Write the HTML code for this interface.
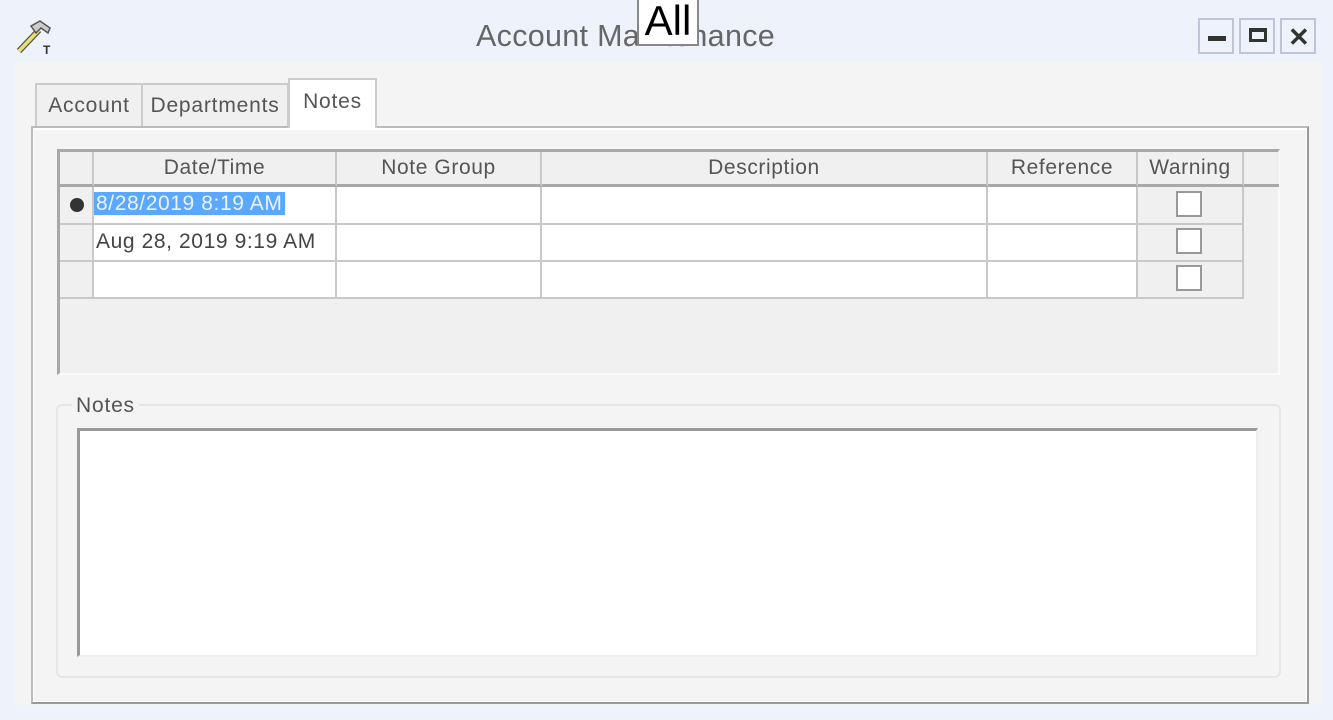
<!DOCTYPE html>
<html><head><meta charset="utf-8"><style>
*{margin:0;padding:0;box-sizing:border-box}
body{width:1333px;height:720px;background:#eef2fb;position:relative;overflow:hidden;font-family:"Liberation Sans",sans-serif;color:#444}
.a{position:absolute}
.t{font-size:21px;letter-spacing:0.8px;color:#555}
.hdr{background:#f0f0f0;border-right:2px solid #c8c8c8;border-bottom:3px solid #a8a8a8;text-align:center;font-size:21px;letter-spacing:0.6px;color:#555;line-height:32px}
.cell{background:#fff;border-right:2px solid #c8c8c8;border-bottom:2px solid #c8c8c8;font-size:21px;letter-spacing:0.6px;line-height:34px;color:#444}
.g{background:#f0f0f0}
.cb{position:absolute;width:26px;height:26px;border:2px solid #999;background:#fff}
.btn{position:absolute;top:18px;width:36px;height:36px;border:2px solid #bcc6d6;background:#eef2fb}
</style></head><body>
<!-- title bar -->
<svg class="a" style="left:16px;top:20px" width="40" height="36" viewBox="0 0 40 36">
<path d="M3 31 L23 10" stroke="#555" stroke-width="6" fill="none"/>
<path d="M3 31 L23 10" stroke="#e8e070" stroke-width="3.5" fill="none"/>
<path d="M15 6 L24 1 L34 8 L32 13 L25 8 L20 13 Z" fill="#ccc" stroke="#555" stroke-width="1.5"/>
<text x="27" y="34" font-size="12" font-weight="bold" font-family="Liberation Sans" fill="#333">T</text>
</svg>
<div class="a" style="left:476px;top:19px;font-size:30.5px;color:#666;letter-spacing:0.3px">Account Maintenance</div>
<div class="a" style="left:637px;top:-2px;width:62px;height:48px;background:#fff;border:2px solid #888;font-size:42px;color:#000;line-height:42px;text-align:center">All</div>
<div class="btn" style="left:1198px"><div class="a" style="left:8px;top:16px;width:18px;height:5px;background:#333"></div></div>
<div class="btn" style="left:1239px"><div class="a" style="left:8px;top:8px;width:18px;height:14px;border:3px solid #333;border-top-width:4px"></div></div>
<div class="btn" style="left:1280px"><div class="a" style="left:6px;top:2px;font-size:26px;font-weight:bold;color:#333">✕</div></div>

<!-- body -->
<div class="a" style="left:15px;top:62px;width:1307px;height:643px;background:#f4f4f4"></div>
<!-- tabs -->
<div class="a t" style="left:35px;top:83px;width:108px;height:44px;border:2px solid #ccc;border-bottom:none;background:#f0f0f0;text-align:center;line-height:42px">Account</div>
<div class="a t" style="left:143px;top:83px;width:146px;height:44px;border:2px solid #ccc;border-bottom:none;border-left:none;background:#f0f0f0;text-align:center;line-height:42px">Departments</div>
<div class="a" style="left:31px;top:126px;width:1278px;height:578px;border:2px solid #bbb;border-right-color:#999;border-bottom-color:#999;background:#fff"></div>
<div class="a t" style="left:288px;top:78px;width:89px;height:52px;border:2px solid #ccc;border-bottom:none;background:#fff;text-align:center;line-height:44px">Notes</div>
<div class="a" style="left:33px;top:128px;width:1274px;height:574px;background:#f4f4f4;border:1px solid #fff;border-top:2px solid #fff"></div>

<!-- grid -->
<div class="a" style="left:57px;top:149px;width:1223px;height:226px;background:#f0f0f0;border-top:3px solid #a8a8a8;border-left:3px solid #a8a8a8;border-bottom:2px solid #fafafa;border-right:2px solid #fafafa"></div>
<div class="a hdr" style="left:60px;top:152px;width:34px;height:35px"></div>
<div class="a hdr" style="left:94px;top:152px;width:243px;height:35px">Date/Time</div>
<div class="a hdr" style="left:337px;top:152px;width:205px;height:35px">Note Group</div>
<div class="a hdr" style="left:542px;top:152px;width:446px;height:35px">Description</div>
<div class="a hdr" style="left:988px;top:152px;width:150px;height:35px">Reference</div>
<div class="a hdr" style="left:1138px;top:152px;width:106px;height:35px">Warning</div>
<div class="a hdr" style="left:1244px;top:152px;width:35px;height:35px;border-right:none"></div>

<!-- rows -->
<div class="a cell g" style="left:60px;top:187px;width:34px;height:38px"><div class="a" style="left:10px;top:11px;width:14px;height:14px;border-radius:50%;background:#333"></div></div>
<div class="a cell" style="left:94px;top:187px;width:243px;height:38px"><span style="background:#5aa8ff;color:#eaf3ff;padding:0 2px">8/28/2019 8:19 AM</span></div>
<div class="a cell" style="left:337px;top:187px;width:205px;height:38px"></div>
<div class="a cell" style="left:542px;top:187px;width:446px;height:38px"></div>
<div class="a cell" style="left:988px;top:187px;width:150px;height:38px"></div>
<div class="a cell g" style="left:1138px;top:187px;width:106px;height:38px"><div class="cb" style="left:38px;top:4px"></div></div>

<div class="a cell g" style="left:60px;top:225px;width:34px;height:37px"></div>
<div class="a cell" style="left:94px;top:225px;width:243px;height:37px;padding-left:2px">Aug 28, 2019 9:19 AM</div>
<div class="a cell" style="left:337px;top:225px;width:205px;height:37px"></div>
<div class="a cell" style="left:542px;top:225px;width:446px;height:37px"></div>
<div class="a cell" style="left:988px;top:225px;width:150px;height:37px"></div>
<div class="a cell g" style="left:1138px;top:225px;width:106px;height:37px"><div class="cb" style="left:38px;top:3px"></div></div>

<div class="a cell g" style="left:60px;top:262px;width:34px;height:37px"></div>
<div class="a cell" style="left:94px;top:262px;width:243px;height:37px"></div>
<div class="a cell" style="left:337px;top:262px;width:205px;height:37px"></div>
<div class="a cell" style="left:542px;top:262px;width:446px;height:37px"></div>
<div class="a cell" style="left:988px;top:262px;width:150px;height:37px"></div>
<div class="a cell g" style="left:1138px;top:262px;width:106px;height:37px"><div class="cb" style="left:38px;top:3px"></div></div>

<!-- notes group -->
<div class="a" style="left:56px;top:404px;width:1225px;height:274px;border:2px solid #e6e6e6;border-radius:6px"></div>
<div class="a t" style="left:72px;top:394px;background:#f4f4f4;padding:0 4px">Notes</div>
<div class="a" style="left:77px;top:428px;width:1181px;height:229px;background:#fff;border-top:3px solid #999;border-left:3px solid #999;border-right:2px solid #eee;border-bottom:2px solid #eee"></div>
</body></html>
